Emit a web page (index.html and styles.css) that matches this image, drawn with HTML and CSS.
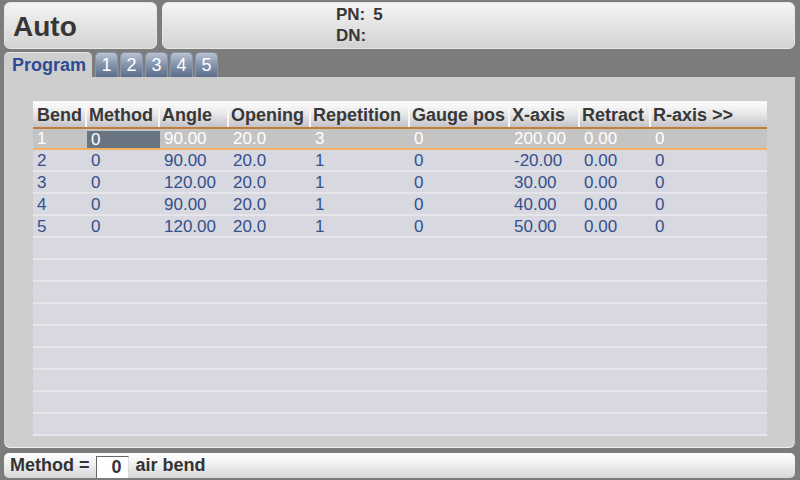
FILE: index.html
```html
<!DOCTYPE html>
<html lang="en">
<head>
    <meta charset="UTF-8">
    <title>Auto - Program</title>
    <link rel="stylesheet" href="styles.css">
</head>
<body>
    <div class="top">
        <div class="mode-box">Auto</div>
        <div class="info-box">
            <div>PN:<span class="gap"></span>5</div>
            <div>DN:</div>
        </div>
    </div>

    <div class="tabs">
        <div class="tab tab-main">Program</div>
        <div class="tab tab-num">1</div>
        <div class="tab tab-num">2</div>
        <div class="tab tab-num">3</div>
        <div class="tab tab-num">4</div>
        <div class="tab tab-num">5</div>
    </div>

    <div class="panel">
        <div class="bend-table">
            <div class="row head">
                <div class="cell">Bend</div>
                <div class="cell">Method</div>
                <div class="cell">Angle</div>
                <div class="cell">Opening</div>
                <div class="cell">Repetition</div>
                <div class="cell">Gauge pos</div>
                <div class="cell">X-axis</div>
                <div class="cell">Retract</div>
                <div class="cell">R-axis &gt;&gt;</div>
            </div>
            <div class="row selected">
                <div class="cell">1</div>
                <div class="cell active">0</div>
                <div class="cell">90.00</div>
                <div class="cell">20.0</div>
                <div class="cell">3</div>
                <div class="cell">0</div>
                <div class="cell">200.00</div>
                <div class="cell">0.00</div>
                <div class="cell">0</div>
            </div>
            <div class="row">
                <div class="cell">2</div>
                <div class="cell">0</div>
                <div class="cell">90.00</div>
                <div class="cell">20.0</div>
                <div class="cell">1</div>
                <div class="cell">0</div>
                <div class="cell">-20.00</div>
                <div class="cell">0.00</div>
                <div class="cell">0</div>
            </div>
            <div class="row">
                <div class="cell">3</div>
                <div class="cell">0</div>
                <div class="cell">120.00</div>
                <div class="cell">20.0</div>
                <div class="cell">1</div>
                <div class="cell">0</div>
                <div class="cell">30.00</div>
                <div class="cell">0.00</div>
                <div class="cell">0</div>
            </div>
            <div class="row">
                <div class="cell">4</div>
                <div class="cell">0</div>
                <div class="cell">90.00</div>
                <div class="cell">20.0</div>
                <div class="cell">1</div>
                <div class="cell">0</div>
                <div class="cell">40.00</div>
                <div class="cell">0.00</div>
                <div class="cell">0</div>
            </div>
            <div class="row">
                <div class="cell">5</div>
                <div class="cell">0</div>
                <div class="cell">120.00</div>
                <div class="cell">20.0</div>
                <div class="cell">1</div>
                <div class="cell">0</div>
                <div class="cell">50.00</div>
                <div class="cell">0.00</div>
                <div class="cell">0</div>
            </div>
            <!-- empty rows -->
            <div class="row"></div>
            <div class="row"></div>
            <div class="row"></div>
            <div class="row"></div>
            <div class="row"></div>
            <div class="row"></div>
            <div class="row"></div>
            <div class="row"></div>
            <div class="row"></div>
        </div>
    </div>

    <div class="footer">
        <span>Method =</span>
        <span class="value-box">0</span>
        <span>air bend</span>
    </div>
</body>
</html>
```

FILE: styles.css
```css
body {
    margin: 0;
    width: 800px;
    height: 480px;
    overflow: hidden;
    background-color: #7c7c7c;
    font-family: "Liberation Sans", Arial, sans-serif;
    color: #363636;
}
.top {
    display: flex;
    gap: 5px;
    height: 47px;
    padding: 2px 5px 0 4px;
}
.mode-box,
.info-box {
    box-sizing: border-box;
    border: 1px solid #e6e6e6;
    border-radius: 6px;
    background: linear-gradient(#f4f4f4, #e2e2e2 55%, #d2d2d2);
}
.mode-box {
    width: 153px;
    display: flex;
    align-items: center;
    padding: 2px 0 0 8px;
    font-size: 28px;
    font-weight: bold;
}
.info-box {
    flex: 1;
    padding: 1px 0 0 173px;
    font-size: 17px;
    font-weight: bold;
    line-height: 21px;
}
.gap {
    display: inline-block;
    width: 8px;
}
.tabs {
    display: flex;
    gap: 2px;
    height: 25px;
    margin-top: 3px;
    padding-left: 4px;
}
.tab {
    box-sizing: border-box;
    border-radius: 5px 5px 0 0;
    line-height: 25px;
}
.tab-main {
    width: 88px;
    margin-right: 1px;
    padding-left: 8px;
    background-color: #cecece;
    border-top: 1px solid #e4e4e4;
    color: #2c4c94;
    font-size: 18px;
    font-weight: bold;
    line-height: 24px;
}
.tab-num {
    width: 23px;
    background: linear-gradient(#b8c3d2, #8293ab 50%, #5a6c8a);
    border: 1px solid #8a96a8;
    border-bottom: none;
    color: #fff;
    font-size: 18px;
    text-align: center;
    line-height: 24px;
}
.panel {
    box-sizing: border-box;
    height: 371px;
    margin: 0 5px 0 4px;
    padding: 24px 0 0 29px;
    background-color: #cecece;
    border-radius: 0 0 6px 6px;
    border-bottom: 1px solid #f0f0f0;
}
.bend-table {
    width: 734px;
}
.row {
    display: grid;
    grid-template-columns: 54px 73px 69px 82px 99px 100px 70px 71px 116px;
    height: 20px;
    border-bottom: 2px solid #e6e6ea;
    background-color: #d8d8e0;
    color: #34508c;
    font-size: 17px;
    line-height: 21px;
}
.cell {
    padding-left: 4px;
    white-space: nowrap;
    overflow: hidden;
}
.row.head {
    height: 26px;
    border-bottom: 2px solid #c47c38;
    background: none;
    color: #383838;
    font-size: 18px;
    font-weight: bold;
    line-height: 27px;
}
.head .cell {
    border-right: 2px solid #f6f6f6;
    border-top: 1px solid #fafafa;
    background: linear-gradient(#fdfdfd, #e6e6e8 50%, #c4c4c8);
}
.head .cell:last-child {
    border-right: none;
}
.head .cell + .cell {
    padding-left: 2px;
}
.row.selected {
    height: 19px;
    border-bottom: 2px solid #f4b060;
    background-color: #c4c4c4;
    color: #fff;
    line-height: 19px;
}
.active {
    margin-top: 2px;
    background-color: #687480;
    line-height: 17px;
}
.footer {
    box-sizing: border-box;
    display: flex;
    align-items: center;
    gap: 7px;
    height: 25px;
    margin: 5px 5px 0 4px;
    padding-left: 6px;
    border-radius: 5px;
    background: linear-gradient(#ffffff, #f0f0f0 45%, #d6d6d6);
    font-size: 18px;
    font-weight: bold;
    color: #333;
}
.value-box {
    box-sizing: border-box;
    align-self: flex-end;
    width: 33px;
    height: 22px;
    margin-left: -1px;
    padding-right: 6px;
    background-color: #fff;
    border-top: 1px solid #666;
    border-left: 1px solid #666;
    border-right: 1px solid #ddd;
    text-align: right;
    line-height: 21px;
}
```
